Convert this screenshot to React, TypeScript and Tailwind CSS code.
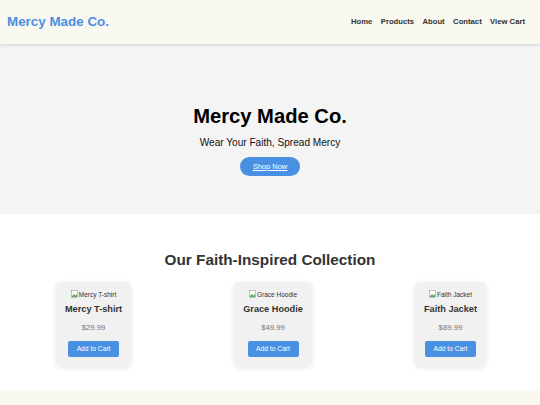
import React from "react";

const products = [
  { name: "Mercy T-shirt", price: "$29.99" },
  { name: "Grace Hoodie", price: "$49.99" },
  { name: "Faith Jacket", price: "$89.99" },
];

function BrokenImg({ alt }: { alt: string }) {
  return (
    <div className="flex items-center justify-center text-[6.5px] leading-[9px] text-[#333]">
      <svg width="7" height="8" viewBox="0 0 7 8" className="mr-[1px]">
        <rect x="0.5" y="0.5" width="6" height="7" fill="#fff" stroke="#999" strokeWidth="0.6" />
        <path d="M1 6 L3 4 L4.5 5.5 L6 4 V7 H1 Z" fill="#6a6" />
      </svg>
      <span>{alt}</span>
    </div>
  );
}

export default function App() {
  return (
    <div className="w-[540px] h-[405px] overflow-hidden bg-white font-['Liberation_Sans',Arial,sans-serif]">
      <header className="relative z-10 h-[44px] bg-[#f9f8f1] shadow-[0_1px_4px_rgba(0,0,0,0.15)] flex items-center justify-between pl-[7px] pr-[15px]">
        <div className="text-[13.4px] font-bold text-[#4a90e2]">Mercy Made Co.</div>
        <nav className="flex gap-[8.4px] text-[7.7px] font-bold text-[#333]">
          <span>Home</span>
          <span>Products</span>
          <span>About</span>
          <span>Contact</span>
          <span>View Cart</span>
        </nav>
      </header>
      <section className="h-[170px] bg-[#f4f4f4] flex flex-col items-center pt-[60px]">
        <h1 className="text-[20.2px] font-bold text-black leading-[24px]">Mercy Made Co.</h1>
        <p className="text-[10.1px] text-[#111] mt-[9px] leading-[12px]">Wear Your Faith, Spread Mercy</p>
        <button className="mt-[8px] w-[60px] h-[19px] rounded-full bg-[#4a90e2] text-white text-[7.5px] underline">
          Shop Now
        </button>
      </section>
      <section className="h-[176px] bg-white pt-[37px]">
        <h2 className="text-center text-[15.3px] font-bold text-[#333] leading-[18px]">Our Faith-Inspired Collection</h2>
        <div className="flex justify-center gap-[103px] mt-[13px] pl-[2px]">
          {products.map((p) => (
            <div
              key={p.name}
              className="bg-[#f1f1f1] rounded-[5px] shadow-[0_1px_5px_rgba(0,0,0,0.1)] px-[9px] pt-[7.5px] pb-[10px] flex flex-col items-center"
            >
              <BrokenImg alt={p.name} />
              <div className="text-[9.2px] font-bold text-[#333] mt-[5px] leading-[11px]">{p.name}</div>
              <div className="text-[7.75px] text-[#777] mt-[8.5px] leading-[10px]">{p.price}</div>
              <button className="mt-[8px] w-[51px] h-[16px] rounded-[2px] bg-[#4a90e2] text-white text-[6.7px]">
                Add to Cart
              </button>
            </div>
          ))}
        </div>
      </section>
      <footer className="h-[20px] bg-[#f9f8f1]" />
    </div>
  );
}
